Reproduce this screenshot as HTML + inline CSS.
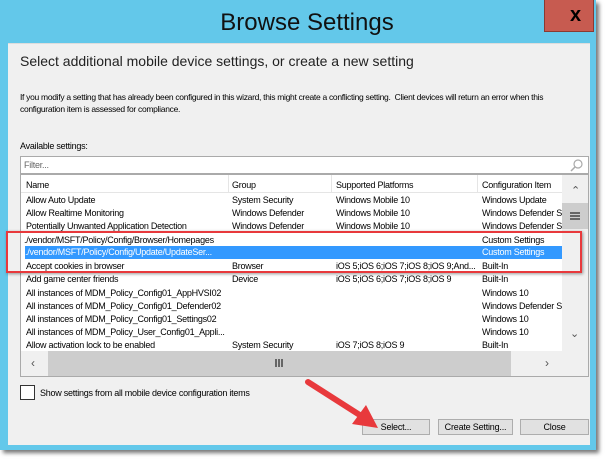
<!DOCTYPE html>
<html><head><style>
*{margin:0;padding:0;box-sizing:border-box}
body{width:616px;height:468px;background:#fff;position:relative;overflow:hidden;font-family:"Liberation Sans",sans-serif;color:#000}
.a{position:absolute}
.t{font-size:9px;letter-spacing:-0.25px;white-space:nowrap;position:absolute}
.row{position:absolute;left:20px;width:542px;height:13px}
.row span{position:absolute;top:1px;font-size:9px;letter-spacing:-0.25px;white-space:nowrap}
.btn{position:absolute;top:419px;height:16px;background:#e1e1e1;border:1px solid #adadad;font-size:9px;text-align:center;line-height:14px;letter-spacing:-0.2px}
</style></head><body>
<div class="a" style="left:0;top:0;width:596px;height:450px;background:#63c8ea;box-shadow:3px 3px 4px #777"></div>
<div class="a" style="left:544px;top:0;width:50px;height:32px;background:#c75b50;border:1px solid #8a3a32;border-top:none"></div>
<div class="a" style="left:570px;top:4px;font-size:20px;font-weight:bold">x</div>
<div class="a" style="left:0;top:9px;width:614px;text-align:center;font-size:24px;color:#111">Browse Settings</div>
<div class="a" style="left:8px;top:43px;width:582px;height:402px;background:#f0f0f0"></div>
<div class="a" style="left:8px;top:43px;width:582px;height:1px;background:#ddd"></div>
<div class="a" style="left:20px;top:53px;font-size:14px;color:#222">Select additional mobile device settings, or create a new setting</div>
<div class="t" style="left:20px;top:92px;font-size:8.5px;letter-spacing:-0.3px">If you modify a setting that has already been configured in this wizard, this might create a conflicting setting.&nbsp; Client devices will return an error when this</div>
<div class="t" style="left:20px;top:104px;font-size:8.5px;letter-spacing:-0.3px">configuration item is assessed for compliance.</div>
<div class="t" style="left:20px;top:141px">Available settings:</div>
<div class="a" style="left:20px;top:156px;width:569px;height:18px;background:#fff;border:1px solid #aaa"></div>
<div class="t" style="left:24px;top:160px;color:#666">Filter...</div>
<svg class="a" style="left:570px;top:158px" width="14" height="14"><circle cx="8" cy="6" r="4" fill="none" stroke="#aaa" stroke-width="1.2"/><line x1="5" y1="9" x2="1" y2="13" stroke="#aaa" stroke-width="1.5"/></svg>
<div class="a" style="left:20px;top:174px;width:569px;height:203px;background:#fff;border:1px solid #aaa"></div>
<div class="a" style="left:21px;top:192px;width:541px;height:1px;background:#e5e5e5"></div>
<div class="a" style="left:228px;top:175px;width:1px;height:17px;background:#e5e5e5"></div>
<div class="a" style="left:331px;top:175px;width:1px;height:17px;background:#e5e5e5"></div>
<div class="a" style="left:477px;top:175px;width:1px;height:17px;background:#e5e5e5"></div>
<div class="t" style="left:26px;top:180px">Name</div>
<div class="t" style="left:232px;top:180px">Group</div>
<div class="t" style="left:336px;top:180px">Supported Platforms</div>
<div class="t" style="left:482px;top:180px">Configuration Item</div>
<div class="row" style="top:194px"><span style="left:6px">Allow Auto Update</span><span style="left:212px">System Security</span><span style="left:316px">Windows Mobile 10</span><span style="left:462px">Windows Update</span></div>
<div class="row" style="top:207px"><span style="left:6px">Allow Realtime Monitoring</span><span style="left:212px">Windows Defender</span><span style="left:316px">Windows Mobile 10</span><span style="left:462px">Windows Defender S</span></div>
<div class="row" style="top:220px"><span style="left:6px">Potentially Unwanted Application Detection</span><span style="left:212px">Windows Defender</span><span style="left:316px">Windows Mobile 10</span><span style="left:462px">Windows Defender S</span></div>
<div class="row" style="top:234px"><span style="left:4px">./vendor/MSFT/Policy/Config/Browser/Homepages</span><span style="left:462px">Custom Settings</span></div>
<div class="row" style="top:246px;left:25px;width:537px;background:#3399ff;color:#fff"><span style="left:0">./vendor/MSFT/Policy/Config/Update/UpdateSer...</span><span style="left:457px">Custom Settings</span></div>
<div class="row" style="top:260px"><span style="left:6px">Accept cookies in browser</span><span style="left:212px">Browser</span><span style="left:316px">iOS 5;iOS 6;iOS 7;iOS 8;iOS 9;And...</span><span style="left:462px">Built-In</span></div>
<div class="row" style="top:273px"><span style="left:6px">Add game center friends</span><span style="left:212px">Device</span><span style="left:316px">iOS 5;iOS 6;iOS 7;iOS 8;iOS 9</span><span style="left:462px">Built-In</span></div>
<div class="row" style="top:287px"><span style="left:6px">All instances of MDM_Policy_Config01_AppHVSI02</span><span style="left:462px">Windows 10</span></div>
<div class="row" style="top:300px"><span style="left:6px">All instances of MDM_Policy_Config01_Defender02</span><span style="left:462px">Windows Defender S</span></div>
<div class="row" style="top:313px"><span style="left:6px">All instances of MDM_Policy_Config01_Settings02</span><span style="left:462px">Windows 10</span></div>
<div class="row" style="top:326px"><span style="left:6px">All instances of MDM_Policy_User_Config01_Appli...</span><span style="left:462px">Windows 10</span></div>
<div class="row" style="top:339px"><span style="left:6px">Allow activation lock to be enabled</span><span style="left:212px">System Security</span><span style="left:316px">iOS 7;iOS 8;iOS 9</span><span style="left:462px">Built-In</span></div>
<div class="a" style="left:562px;top:175px;width:26px;height:176px;background:#f0f0f0"></div>
<div class="a" style="left:562px;top:203px;width:26px;height:26px;background:#cdcdcd"></div>
<div class="a" style="left:570px;top:212px;width:10px;height:8px;border-top:2px solid #666;border-bottom:2px solid #666"></div>
<div class="a" style="left:570px;top:215px;width:10px;height:2px;background:#666"></div>
<div class="a" style="left:571px;top:184px;font-size:11px;color:#555">&#8963;</div>
<div class="a" style="left:570px;top:327px;font-size:11px;color:#555">&#8964;</div>
<div class="a" style="left:21px;top:351px;width:541px;height:25px;background:#f0f0f0"></div>
<div class="a" style="left:48px;top:351px;width:463px;height:25px;background:#cdcdcd"></div>
<div class="a" style="left:275px;top:359px;width:8px;height:8px;border-left:2px solid #666;border-right:2px solid #666"></div>
<div class="a" style="left:278px;top:359px;width:2px;height:8px;background:#666"></div>
<div class="a" style="left:31px;top:356px;font-size:12px;color:#555">&lsaquo;</div>
<div class="a" style="left:545px;top:356px;font-size:12px;color:#555">&rsaquo;</div>
<div class="a" style="left:562px;top:351px;width:26px;height:25px;background:#f0f0f0"></div>
<div class="a" style="left:6px;top:231px;width:576px;height:42px;border:2px solid #e8393c;box-shadow:1px 1px 3px rgba(0,0,0,.4)"></div>
<div class="a" style="left:20px;top:385px;width:15px;height:15px;background:#fff;border:1px solid #333"></div>
<div class="t" style="left:40px;top:388px">Show settings from all mobile device configuration items</div>
<div class="btn" style="left:362px;width:68px">Select...</div>
<div class="btn" style="left:438px;width:75px">Create Setting...</div>
<div class="btn" style="left:520px;width:69px">Close</div>
<svg class="a" style="left:0;top:0" width="616" height="468">
<line x1="308" y1="382" x2="366" y2="419" stroke="#e8393c" stroke-width="6" stroke-linecap="round"/>
<polygon points="352,424 378,428 366,405" fill="#e8393c"/>
</svg>
</body></html>
